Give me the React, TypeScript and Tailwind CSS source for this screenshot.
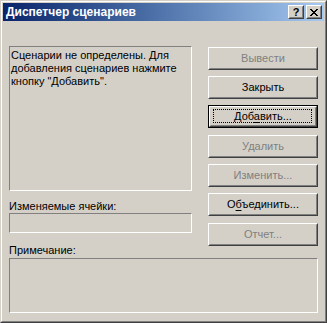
import React from "react";

type BtnProps = {
    children: React.ReactNode;
    disabled?: boolean;
    isDefault?: boolean;
    className?: string;
};

const Btn: React.FC<BtnProps> = ({ children, disabled, isDefault, className }) => {
    const face = (
        <div className="relative h-full w-full border border-t-white border-l-white border-b-[#404040] border-r-[#404040]">
            <div className="h-full w-full border border-t-[#d4d0c8] border-l-[#d4d0c8] border-b-[#808080] border-r-[#808080] flex items-center justify-center">
                <span className={disabled ? "text-[#808080]" : "text-black"}>{children}</span>
            </div>
            {isDefault && (
                <div className="absolute left-[3px] right-[4px] top-[2px] bottom-[3px] border border-dotted border-black" />
            )}
        </div>
    );

    return (
        <div className={"h-[23px] w-[110px] bg-[#d4d0c8] " + (className ?? "")}>
            {isDefault ? <div className="h-full w-full border border-black">{face}</div> : face}
        </div>
    );
};

const Sunken: React.FC<{ className?: string; children?: React.ReactNode }> = ({ className, children }) => (
    <div className={"border border-t-[#808080] border-l-[#808080] border-b-white border-r-white " + (className ?? "")}>
        {children}
    </div>
);

const TitleBtn: React.FC<{ children: React.ReactNode }> = ({ children }) => (
    <div className="h-[14px] w-[16px] bg-[#d4d0c8] border border-t-white border-l-white border-b-[#404040] border-r-[#404040]">
        <div className="h-full w-full border border-t-[#d4d0c8] border-l-[#d4d0c8] border-b-[#808080] border-r-[#808080] flex items-center justify-center">
            {children}
        </div>
    </div>
);

export default function App() {
    return (
        <div className="w-[327px] h-[323px] bg-[#d4d0c8] font-['Liberation_Sans',Arial,sans-serif] text-[11px] leading-[13px] text-black">
            <div className="h-full w-full border border-t-[#d4d0c8] border-l-[#d4d0c8] border-b-[#404040] border-r-[#404040]">
                <div className="h-full w-full border border-t-white border-l-white border-b-[#808080] border-r-[#808080] p-px flex flex-col">
                    {/* title bar */}
                    <div className="h-[18px] flex items-center bg-gradient-to-r from-[#0a246a] to-[#a6caf0] pl-[3px] pr-[2px]">
                        <span className="text-white font-bold text-[12px] leading-[14px] flex-1">
                            Диспетчер сценариев
                        </span>
                        <TitleBtn>
                            <span className="font-bold text-[11px] leading-[10px] text-black">?</span>
                        </TitleBtn>
                        <div className="w-[2px]" />
                        <TitleBtn>
                            <svg width="8" height="7" viewBox="0 0 8 7" shapeRendering="crispEdges">
                                <path
                                    d="M0 0h2v1H0zM6 0h2v1H6zM1 1h2v1H1zM5 1h2v1H5zM2 2h4v1H2zM3 3h2v1H3zM2 4h4v1H2zM1 5h2v1H1zM5 5h2v1H5zM0 6h2v1H0zM6 6h2v1H6z"
                                    fill="#000"
                                />
                            </svg>
                        </TitleBtn>
                    </div>

                    {/* body */}
                    <div className="flex-1 px-[6px]">
                        <div className="flex items-start">
                            <div className="w-[183px] pt-[25px] flex flex-col">
                                <Sunken className="h-[145px] pt-[2px] pl-[1px]">
                                    <p>
                                        Сценарии не определены. Для
                                        <br />
                                        добавления сценариев нажмите
                                        <br />
                                        кнопку "Добавить".
                                    </p>
                                </Sunken>
                                <div className="mt-[9px]">Изменяемые ячейки:</div>
                                <Sunken className="h-[20px]" />
                                <div className="mt-[11px]">Примечание:</div>
                            </div>
                            <div className="ml-[16px] pt-[26px] flex flex-col">
                                <Btn disabled>Вывести</Btn>
                                <Btn className="mt-[6px]">Закрыть</Btn>
                                <Btn isDefault className="mt-[6px]">
                                    Доб<span className="underline underline-offset-2">а</span>вить...
                                </Btn>
                                <Btn disabled className="mt-[7px]">Удалить</Btn>
                                <Btn disabled className="mt-[6px]">Изменить...</Btn>
                                <Btn className="mt-[6px]">
                                    О<span className="underline underline-offset-2">б</span>ъединить...
                                </Btn>
                                <Btn disabled className="mt-[7px]">Отчет...</Btn>
                            </div>
                        </div>
                        <Sunken className="mt-px h-[55px] w-[309px]" />
                    </div>
                </div>
            </div>
        </div>
    );
}
